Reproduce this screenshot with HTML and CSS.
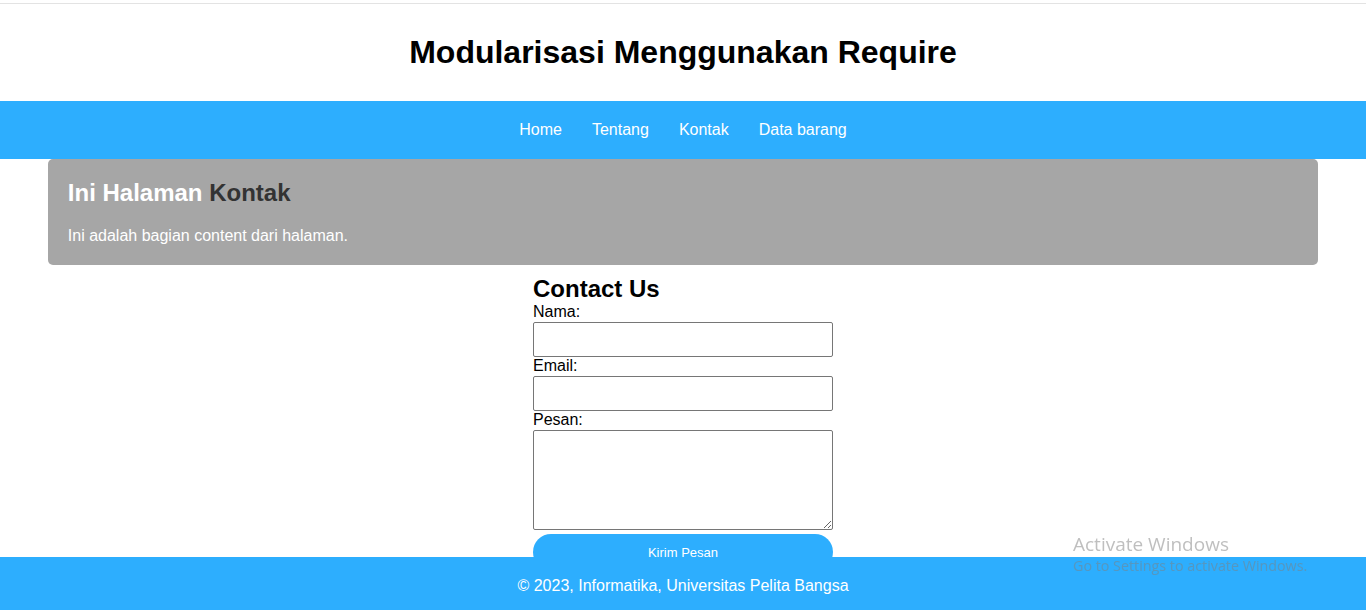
FILE: index.html
```html
<!DOCTYPE html>
<html lang="id">
<head>
<meta charset="utf-8">
<title>Modularisasi Menggunakan Require</title>
<link rel="stylesheet" href="styles.css">
</head>
<body>
<header class="site-header">
  <h1 class="site-title">Modularisasi Menggunakan Require</h1>
</header>
<nav class="main-nav">
  <a href="#" class="nav-link">Home</a>
  <a href="#" class="nav-link">Tentang</a>
  <a href="#" class="nav-link">Kontak</a>
  <a href="#" class="nav-link">Data barang</a>
</nav>
<section class="content-box">
  <h2 class="content-title">Ini Halaman <span class="accent">Kontak</span></h2>
  <p class="content-text">Ini adalah bagian content dari halaman.</p>
</section>
<form class="contact-form">
  <h2 class="form-title">Contact Us</h2>
  <label class="form-label" for="nama">Nama:</label>
  <input class="form-input" type="text" id="nama">
  <label class="form-label" for="email">Email:</label>
  <input class="form-input" type="email" id="email">
  <label class="form-label" for="pesan">Pesan:</label>
  <textarea class="form-textarea" id="pesan"></textarea>
  <button class="form-button" type="button">Kirim Pesan</button>
</form>
<footer class="site-footer">© 2023, Informatika, Universitas Pelita Bangsa</footer>
<div class="watermark">
  <div class="wm-title">Activate Windows</div>
  <div class="wm-sub">Go to Settings to activate Windows.</div>
</div>
</body>
</html>
```
FILE: styles.css
```css
html, body {
  margin: 0;
  padding: 0;
}
body {
  font-family: "Liberation Sans", Arial, sans-serif;
  color: #000;
  background: #fff;
  padding-top: 3px;
}
.site-header {
  border-top: 1px solid #e3e3e3;
  height: 97px;
  display: flex;
  align-items: center;
  justify-content: center;
}
.site-title {
  margin: 0;
  font-size: 32px;
  font-weight: bold;
  line-height: 37px;
}
.main-nav {
  background: #2daefe;
  height: 58px;
  display: flex;
  align-items: center;
  justify-content: center;
}
.nav-link {
  color: #fff;
  text-decoration: none;
  font-size: 16px;
  padding: 0 15px;
}
.content-box {
  width: 93%;
  margin: 0 auto;
  box-sizing: border-box;
  background: #a6a6a6;
  border-radius: 5px;
  padding: 20px;
  height: 106px;
}
.content-title {
  margin: 0;
  font-size: 24px;
  line-height: 28px;
  color: #fff;
}
.accent {
  color: #333;
}
.content-text {
  margin: 20px 0 0;
  font-size: 16px;
  line-height: 18px;
  color: #fff;
}
.contact-form {
  width: 300px;
  margin: 0 auto;
  display: flex;
  flex-direction: column;
}
.form-title {
  margin: 10px 0 0;
  font-size: 24px;
  line-height: 27px;
}
.form-label {
  font-size: 16px;
  line-height: 18px;
  padding-bottom: 1px;
}
.form-label:first-of-type {
  padding-top: 1px;
}
.form-input {
  box-sizing: border-box;
  width: 300px;
  height: 35px;
  margin: 0;
  border: 1px solid #767676;
  border-radius: 2px;
  padding: 2px 4px;
}
.form-textarea {
  box-sizing: border-box;
  width: 300px;
  height: 100px;
  margin: 0;
  border: 1px solid #767676;
  border-radius: 2px;
}
.form-button {
  margin-top: 4px;
  width: 300px;
  height: 36px;
  border: none;
  border-radius: 20px;
  background: #2daefe;
  color: #fff;
  font-family: "Liberation Sans", Arial, sans-serif;
  font-size: 13px;
  padding: 0;
}
.site-footer {
  position: fixed;
  left: 0;
  right: 0;
  bottom: 0;
  height: 53px;
  box-sizing: border-box;
  background: #2daefe;
  color: #fff;
  font-size: 16px;
  text-align: center;
  padding-top: 20px;
  line-height: 18px;
}
.watermark {
  position: fixed;
  left: 1073px;
  top: 532px;
  color: rgba(128, 128, 128, 0.5);
  font-family: "Open Sans", "Noto Sans", sans-serif;
  pointer-events: none;
}
.wm-title {
  font-size: 19px;
  line-height: 24px;
}
.wm-sub {
  font-size: 14.3px;
  line-height: 20px;
}
```
